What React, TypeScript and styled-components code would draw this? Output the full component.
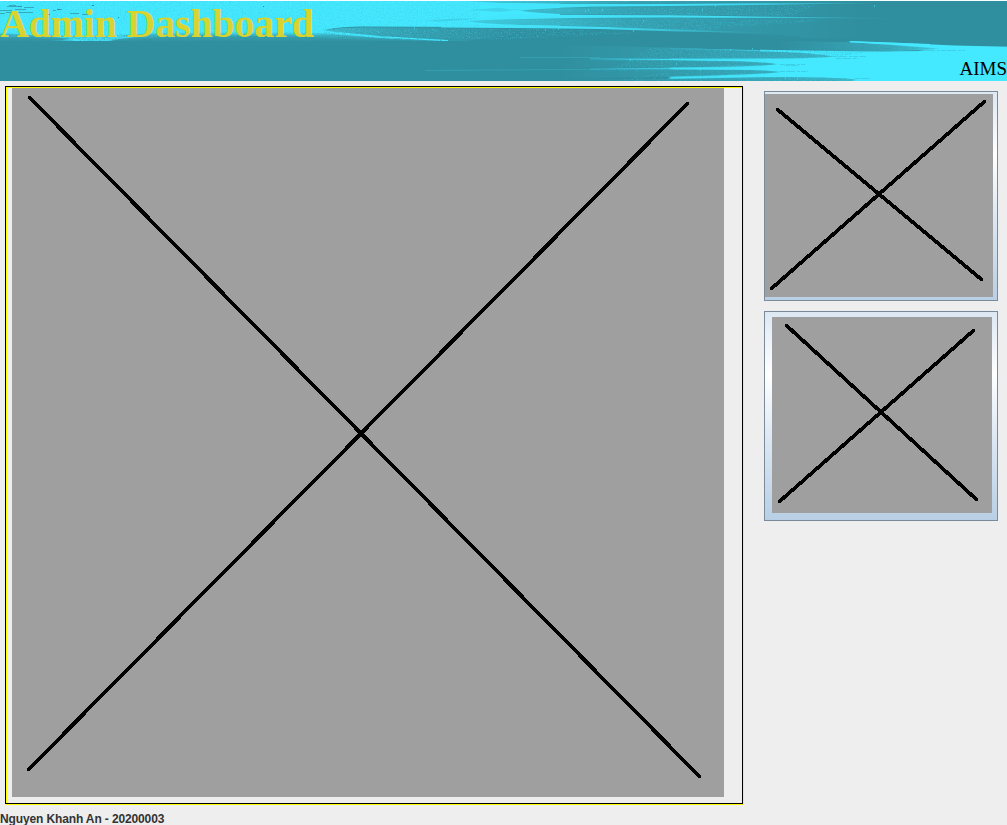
import React from "react";
import styled, { createGlobalStyle } from "styled-components";

const GlobalStyle = createGlobalStyle`
  body { margin: 0; background: #eeeeee; }
  * { box-sizing: border-box; }
`;

const Frame = styled.div`
  display: flex;
  flex-direction: column;
  width: 1007px;
  height: 825px;
  overflow: hidden;
  background: #eeeeee;
`;

const Header = styled.header`
  position: relative;
  display: flex;
  justify-content: space-between;
  height: 81px;
  flex: none;
  border-top: 1px solid #f8ffff;
  background: #308f9f;
  overflow: hidden;
`;

const Banner = styled.svg`
  position: absolute;
  inset: 0;
  display: block;
`;

const Title = styled.h1`
  position: relative;
  margin: 0;
  font: bold 40px/46px "Liberation Serif", serif;
  letter-spacing: -0.2px;
  color: #d7d32f;
  white-space: nowrap;
`;

const Brand = styled.span`
  position: relative;
  align-self: flex-end;
  padding-bottom: 1px;
  font: 19px/22px "Liberation Serif", serif;
  color: #000;
`;

const Body = styled.main`
  display: flex;
  gap: 21px;
  height: 724px;
  padding: 5px 9px 0 5px;
`;

const Canvas = styled.section`
  width: 738px;
  height: 718px;
  padding: 1px 0 0 6px;
  border: 1px solid #000;
  box-shadow: 1px 1px 0 #ff0, inset 1px 1px 0 #ff0;
`;

const Side = styled.aside`
  display: flex;
  flex-direction: column;
  gap: 10px;
  padding-top: 5px;
`;

const ImageButton = styled.button<{ $pad: string }>`
  display: block;
  width: 234px;
  height: 210px;
  margin: 0;
  padding: ${(p) => p.$pad};
  border: 1px solid #7a8a99;
  border-radius: 0;
  background: linear-gradient(#dde8f3 0%, #ffffff 30%, #dde8f3 60%, #b8cfe5 100%);
`;

const Picture = styled.svg`
  display: block;
  background: #9f9f9f;
`;

const Footer = styled.footer`
  font: bold 12px/12px "Liberation Sans", Arial, sans-serif;
  letter-spacing: -0.13px;
  padding-top: 8px;
  color: #333;
  white-space: nowrap;
`;

type Line = [number, number, number, number];

function Placeholder({ width, height, lines }: { width: number; height: number; lines: Line[] }) {
  return (
    <Picture width={width} height={height} viewBox={`0 0 ${width} ${height}`}>
      {lines.map(([x1, y1, x2, y2]) => (
        <line
          key={`${x1}-${y1}`}
          x1={x1} y1={y1} x2={x2} y2={y2}
          stroke="#000" strokeWidth={3.7} strokeLinecap="round" shapeRendering="crispEdges"
        />
      ))}
    </Picture>
  );
}

function BannerArt() {
  return (
    <Banner width="1007" height="80" viewBox="0 1 1007 80" colorInterpolationFilters="sRGB">
      <defs>
        <linearGradient id="gapTop" gradientUnits="userSpaceOnUse" x1="460" x2="860" y1="0" y2="0">
          <stop offset="0" stopColor="#40cfe4" />
          <stop offset="0.18" stopColor="#3bbacc" />
          <stop offset="0.42" stopColor="#35a0b1" />
          <stop offset="1" stopColor="#308f9f" />
        </linearGradient>
        <linearGradient id="gapLeft" gradientUnits="userSpaceOnUse" x1="326" x2="520" y1="0" y2="0">
          <stop offset="0" stopColor="#3dc0d4" />
          <stop offset="0.3" stopColor="#37a6b7" />
          <stop offset="1" stopColor="#308f9f" />
        </linearGradient>
        <linearGradient id="streak" gradientUnits="userSpaceOnUse" x1="440" x2="900" y1="0" y2="0">
          <stop offset="0" stopColor="#44e8ff" />
          <stop offset="0.6" stopColor="#42def4" />
          <stop offset="1" stopColor="#44e8ff" stopOpacity="0" />
        </linearGradient>
        <linearGradient id="streakThird" gradientUnits="userSpaceOnUse" x1="440" x2="800" y1="0" y2="0">
          <stop offset="0" stopColor="#44e8ff" />
          <stop offset="0.45" stopColor="#42ddf3" />
          <stop offset="0.7" stopColor="#3ab8ca" />
          <stop offset="1" stopColor="#308f9f" stopOpacity="0" />
        </linearGradient>
        <linearGradient id="gapLow" gradientUnits="userSpaceOnUse" x1="560" x2="850" y1="0" y2="0">
          <stop offset="0" stopColor="#308f9f" />
          <stop offset="0.4" stopColor="#339bab" />
          <stop offset="0.75" stopColor="#38aabc" />
          <stop offset="1" stopColor="#3bb9cc" />
        </linearGradient>
        <linearGradient id="gapHigh" gradientUnits="userSpaceOnUse" x1="780" x2="960" y1="0" y2="0">
          <stop offset="0" stopColor="#308f9f" />
          <stop offset="0.6" stopColor="#38a9bb" />
          <stop offset="1" stopColor="#42dbf1" />
        </linearGradient>
        <linearGradient id="rise" gradientUnits="userSpaceOnUse" x1="560" x2="770" y1="0" y2="0">
          <stop offset="0" stopColor="#44e8ff" stopOpacity="0.1" />
          <stop offset="0.4" stopColor="#44e8ff" stopOpacity="0.55" />
          <stop offset="1" stopColor="#44e8ff" />
        </linearGradient>
        <linearGradient id="shore" x1="0" x2="0" y1="0" y2="1">
          <stop offset="0" stopColor="#43dcf2" stopOpacity="0" />
          <stop offset="0.4" stopColor="#3bb8ca" />
          <stop offset="1" stopColor="#3294a4" />
        </linearGradient>
        <filter id="soft" x="-2%" y="-20%" width="104%" height="140%">
          <feGaussianBlur stdDeviation="1.5 0.3" />
        </filter>
        <filter id="darkGrain" x="0" y="0" width="100%" height="100%">
          <feTurbulence type="fractalNoise" baseFrequency="0.75" numOctaves="2" seed="8" />
          <feColorMatrix values="0 0 0 0 0.19  0 0 0 0 0.56  0 0 0 0 0.62  3 0 0 0 -1.35" result="g" />
          <feComposite in="g" in2="SourceGraphic" operator="in" />
        </filter>
        <filter id="lightGrain" x="0" y="0" width="100%" height="100%">
          <feTurbulence type="fractalNoise" baseFrequency="0.75" numOctaves="2" seed="15" />
          <feColorMatrix values="0 0 0 0 0.27  0 0 0 0 0.9  0 0 0 0 1  3 0 0 0 -1.45" result="g" />
          <feComposite in="g" in2="SourceGraphic" operator="in" />
        </filter>
        <clipPath id="upper"><rect y="1" width="1007" height="40" /></clipPath>
        <clipPath id="lower"><rect y="41" width="1007" height="40" /></clipPath>
      </defs>

      <g clipPath="url(#upper)">
        <path fill="#44e8ff" d="M-5 -5H560V26L470 27 360 26.5Q335 27 326 30L380 37 448 41H420L330 35.5 250 34 130 41H60L0 41Z" />
        <path fill="url(#shore)" d="M0 32L40 36 75 36.5 115 36 150 33 250 31 320 33 380 38 430 41H115L90 37.5 50 41H0Z" />
        <path fill="#3294a4" opacity=".6" d="M0 37.5L30 37.5 75 41H0ZM115 41L160 37.5 250 36 310 37 380 41Z" />
        <path d="M55 37.2Q105 34.5 145 36L105 40.8H92Z" fill="#42dcf2" filter="url(#soft)" />
        <g filter="url(#soft)">
          <path fill="url(#gapLeft)" d="M324 30Q336 27.5 380 27.3L470 27.8 560 29 680 31V45H455L380 37 335 32.5Z" />
          <path fill="url(#gapTop)" d="M465 -3V1L500 3 580 4 670 4 1010 4V-3Z" />
          <path fill="url(#gapTop)" d="M520 10.5Q545 7.7 600 7L670 6 1010 4V19L670 15 580 14.5Q535 13.5 520 10.5Z" />
          <path fill="url(#gapTop)" d="M468 21.3Q500 18.2 570 17.8L670 17.6 1010 18V38H780L670 29.6 600 26.5 520 25Q485 24 468 21.3Z" />
          <path fill="#308f9f" d="M560 29.5L620 30 700 32 800 36V43H450Z" opacity=".8" />
        </g>
        <g fill="#3dcbe0" opacity=".6" filter="url(#soft)">
          <path d="M425 20.5L455 18.5 480 18.7 440 21.7Z" />
          <path d="M470 10L500 7.5 525 9 500 12Z" />
        </g>
        <g fill="url(#streak)">
          <path d="M470 2.8L570 4 670 4 780 3.2 880 3 780 4.8 670 6 590 6.8 510 9.5Z" />
          <path d="M500 14L590 15 670 15.3 760 16.6 900 18.2 760 18 670 17.5 570 17.9 470 20Z" />
        </g>
        <path fill="url(#streakThird)" d="M450 24L520 25.1 600 26.8 670 29.2 780 33.2 670 31.2 600 29.1 540 28.2 440 27.5Z" />
        <path d="M324 31.5L380 36.7 448 40.7" fill="none" stroke="#44e8ff" strokeWidth="1.4" />
        <path d="M0 1H480V30H330L320 34 0 33Z" filter="url(#darkGrain)" opacity=".16" />
        <path d="M0 34L320 35 330 29 600 30 640 35 580 41H0Z" filter="url(#darkGrain)" opacity=".5" />
        <path d="M330 29L560 29 640 33 500 40 400 36ZM490 1H760L560 3ZM525 10L680 7 820 5 790 16 600 14ZM480 21L680 18 830 20 700 30 560 25Z" filter="url(#lightGrain)" opacity=".32" />
        <g stroke="#308b9a" fill="none">
          <path d="M7 6.5H22M24 7.5H34M9 5.5H16M0 10.5H12M15 9.5H26M18 12.5H33M0 13.5H5M6 12.5H14M18 6.5H22M58 9.5H62M53 10.5H56M70 13.5H79M82 14.5H88" opacity=".65" />
          <path d="M48 14.5H50M118 17.5H119M263 6.5H264M92 5.5H94M57 9.5H60" />
        </g>
      </g>

      <g clipPath="url(#lower)">
        <path fill="url(#rise)" d="M670 48L770 50.5 860 51.5 925 51Q900 47 846 41.2L900 43 955 45.5 1010 46.8V83H645L670 78.6 670 66 560 60 670 59Z" filter="url(#soft)" />
        <g filter="url(#soft)">
          <path fill="url(#gapHigh)" d="M780 41L848 42.3 890 44.7 938 48.5Q920 51.2 860 51.4L780 50.4Z" />
          <path fill="url(#gapLow)" d="M530 44L670 47.5 770 51.6Q820 53.5 832 56.7 810 58.8 740 58.5L670 58.5 530 58Z" />
          <path fill="url(#gapLow)" d="M530 60L670 60.2 740 61.2Q770 62.5 776 64.3 760 66.8 670 67.5L530 68Z" />
          <path fill="url(#gapLow)" d="M530 70L670 69.5 750 70Q772 70.5 780 72 760 74.8 670 76.4L530 79Z" />
          <path fill="url(#gapLow)" d="M530 80L670 79 760 77.2Q820 76.3 855 79.3L850 83H530Z" />
        </g>
        <path d="M590 58.7L670 59.4 755 60.5M590 69.2L670 68.5 760 68.5M670 77.8L780 75.3" fill="none" stroke="url(#rise)" strokeWidth="1.3" />
        <path d="M520 57.5H600M425 70.5L600 69.3M670 48.8L760 50.6" fill="none" stroke="#3dbacd" opacity=".4" />
        <path d="M760 50.5L880 52.5M850 41.8L930 44.7" fill="none" stroke="#44e8ff" strokeWidth="1.4" />
        <path d="M650 48L780 50 830 55 832 57 780 65 780 73 850 81H610L670 72 600 71 620 65Z" filter="url(#lightGrain)" opacity=".26" />
        <path d="M690 49L800 43 940 48 870 52 830 57 670 58ZM670 61L776 64 670 67ZM670 70L780 72 670 76ZM670 79L850 78 840 81H670Z" filter="url(#darkGrain)" opacity=".4" />
        <g stroke="#3ab8cb" fill="none" strokeDasharray="5 1 9 2 3 1" opacity=".5">
          <path d="M832 56.5H866M836 58.5H858M780 64.5H805M785 65.5H798M920 50.5H965M780 71.5H808M855 78.5H870" />
        </g>
      </g>
      <path d="M453 23h1M569 5h1M585 11h1M588 10h1M602 10h1M545 30h1M558 29h1M378 32h1M414 28h1M633 31h1M643 21h1M630 60h1M874 6h1M715 6h1M702 10h1M730 50h1M752 49h1M676 64h1M700 70h1M785 78h1M797 79h1" stroke="#44e8ff" />
    </Banner>
  );
}

export default function App() {
  return (
    <Frame>
      <GlobalStyle />
      <Header>
        <BannerArt />
        <Title>Admin Dashboard</Title>
        <Brand>AIMS</Brand>
      </Header>
      <Body>
        <Canvas>
          <Placeholder width={712} height={709} lines={[[17.5, 9.5, 687.5, 688.5], [16.5, 681.5, 675.5, 15.5]]} />
        </Canvas>
        <Side>
          <ImageButton $pad="2px 4px 3px 0">
            <Placeholder width={228} height={203} lines={[[12.5, 15.5, 216.5, 185.5], [6.5, 194.5, 219.5, 7.5]]} />
          </ImageButton>
          <ImageButton $pad="5px 5px 7px 7px">
            <Placeholder width={220} height={196} lines={[[14.5, 8.5, 204.5, 182.5], [7.5, 184.5, 201.5, 13.5]]} />
          </ImageButton>
        </Side>
      </Body>
      <Footer>Nguyen Khanh An - 20200003</Footer>
    </Frame>
  );
}
